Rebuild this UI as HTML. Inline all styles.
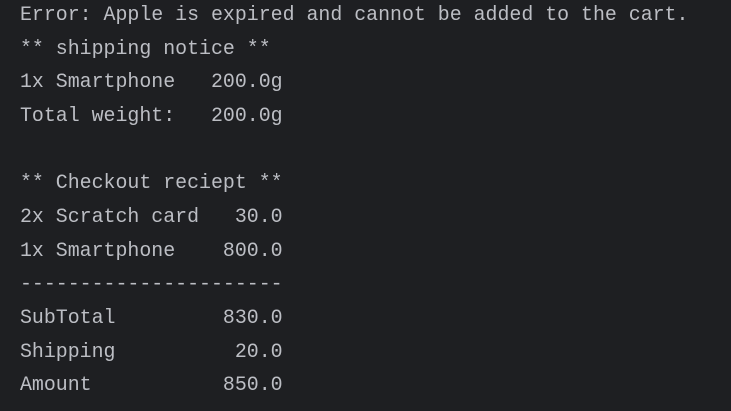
<!DOCTYPE html>
<html><head><style>
html,body{margin:0;padding:0;background:#1e1f22;width:731px;height:411px;overflow:hidden}
pre{position:absolute;left:20px;top:-2px;margin:0;font-family:"Liberation Mono",monospace;font-size:19.9px;line-height:33.65px;color:#bcbec4}
</style></head><body>
<pre>Error: Apple is expired and cannot be added to the cart.
** shipping notice **
1x Smartphone   200.0g
Total weight:   200.0g

** Checkout reciept **
2x Scratch card   30.0
1x Smartphone    800.0
----------------------
SubTotal         830.0
Shipping          20.0
Amount           850.0</pre>
</body></html>
